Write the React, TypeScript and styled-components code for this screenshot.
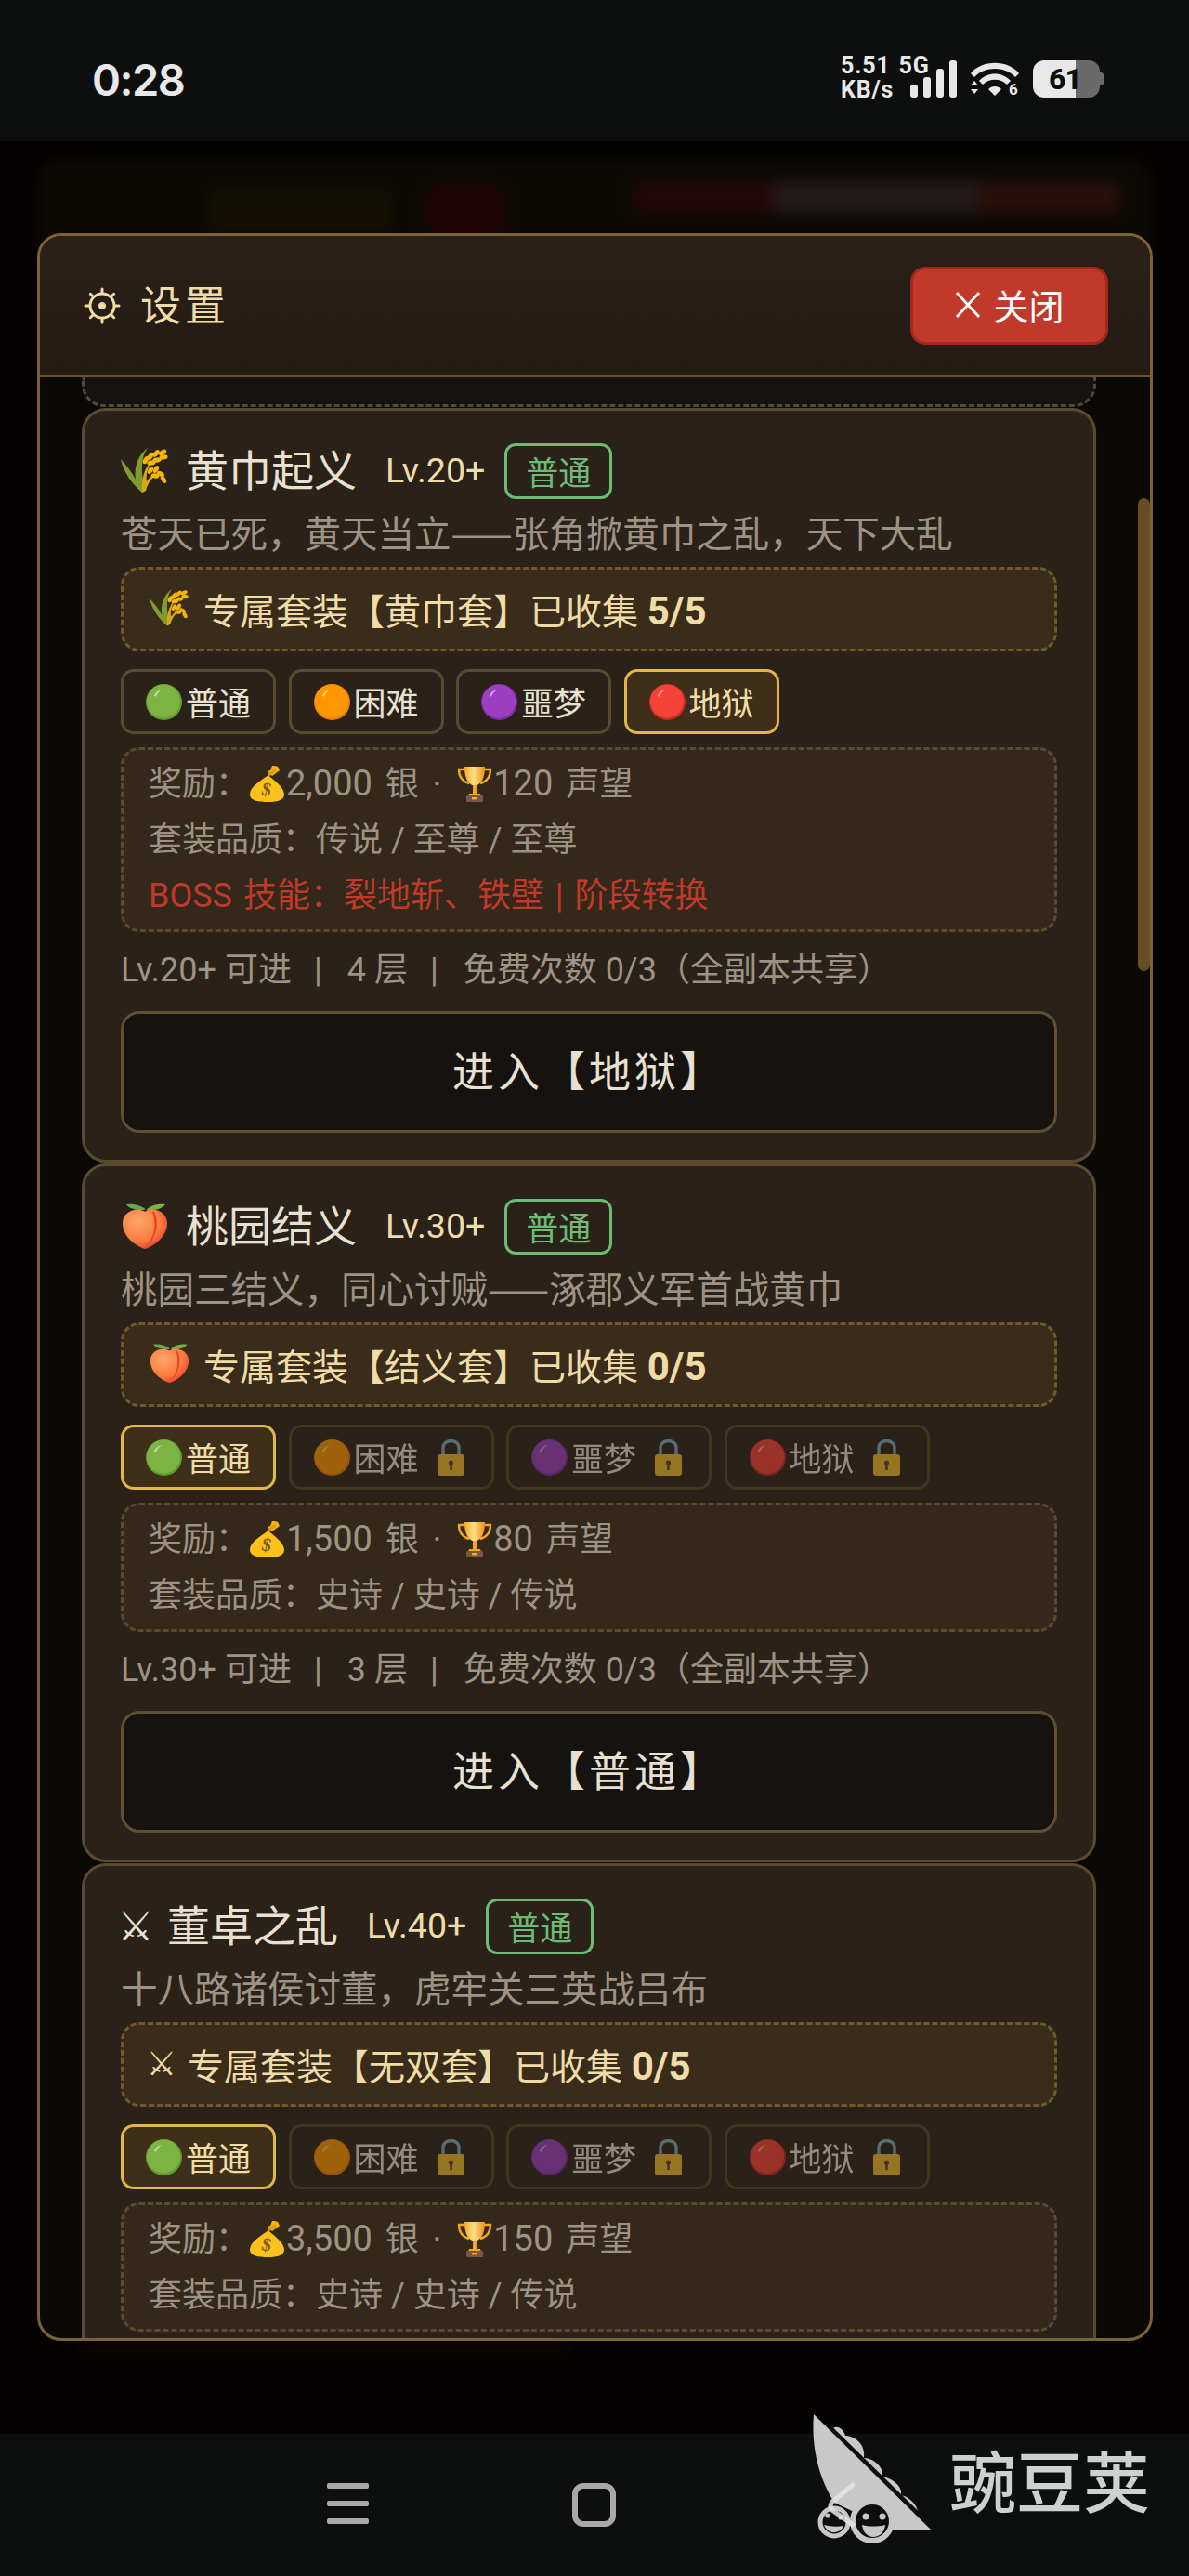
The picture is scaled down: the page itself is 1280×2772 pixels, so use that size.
import React from "react";
import styled, { createGlobalStyle } from "styled-components";

const Colors = {
  GOLD: "#f0dca8",
  TEXT: "#e8e0d0",
  MUTED: "#9c9384",
  LINE: "#5a4a30",
  RED: "#c0392b",
  GREEN: "#6dbb75",
  ACTIVE: "#e2b64a",
};

const FONT = `Roboto, "Noto Sans CJK SC", sans-serif`;

type Level = { dot: string; rim: string; name: string; locked?: boolean; active?: boolean };

const green = { dot: "#7cb342", rim: "#5f9a33", name: "普通" };
const orange = { dot: "#ff9800", rim: "#ef7f00", name: "困难" };
const purple = { dot: "#9c3fc0", rim: "#7d2ea3", name: "噩梦" };
const red = { dot: "#f44336", rim: "#c62828", name: "地狱" };

const Dot = ({ color, rim }: { color: string; rim: string }) => (
  <EmojiSvg $size={39} viewBox="0 0 40 40">
    <circle cx="20" cy="20" r="20" fill={rim} />
    <circle cx="19.5" cy="19" r="18.6" fill={color} />
    <path d="M9 13c2-4 5-6 9-7-3 2-5 4-7 8z" fill="#fff" opacity="0.55" />
  </EmojiSvg>
);

const Wheat = ({ size }: { size: number }) => (
  <EmojiSvg $size={size} viewBox="0 0 52 50">
    <path d="M23 48C12 39 3 26 0 12c7 8 12 14 16 22C14 22 18 8 29 0c-7 10-8 24-3 44z" fill="#7f9c2e" />
    <path d="M23 48c-1-14 2-26 10-34-5 10-6 16-5 22 4-6 8-9 13-9-7 4-12 11-14 19z" fill="#d8a818" />
    <g fill="#f7b500">
      <ellipse cx="27" cy="13" rx="4.6" ry="2.6" transform="rotate(-60 27 13)" />
      <ellipse cx="32" cy="9" rx="4.6" ry="2.6" transform="rotate(-55 32 9)" />
      <ellipse cx="38" cy="6" rx="4.6" ry="2.6" transform="rotate(-45 38 6)" />
      <ellipse cx="45" cy="5" rx="4.6" ry="2.6" transform="rotate(-30 45 5)" />
      <ellipse cx="33" cy="16" rx="4.6" ry="2.6" transform="rotate(-5 33 16)" />
      <ellipse cx="39" cy="13" rx="4.6" ry="2.6" transform="rotate(-5 39 13)" />
      <ellipse cx="46" cy="10" rx="4.6" ry="2.6" transform="rotate(-5 46 10)" />
      <ellipse cx="32" cy="24" rx="4.4" ry="2.5" transform="rotate(-60 32 24)" />
      <ellipse cx="38" cy="23" rx="4.4" ry="2.5" transform="rotate(-60 38 23)" />
      <ellipse cx="37" cy="30" rx="4.4" ry="2.5" transform="rotate(10 37 30)" />
      <ellipse cx="43" cy="28" rx="4.4" ry="2.5" transform="rotate(30 43 28)" />
      <ellipse cx="46" cy="34" rx="4.4" ry="2.5" transform="rotate(60 46 34)" />
    </g>
  </EmojiSvg>
);

const Peach = ({ size }: { size: number }) => (
  <EmojiSvg $size={size} viewBox="0 0 52 52">
    <path d="M26 6C20 1 11 0 5 1c4 5 12 7 21 6z" fill="#6aa84f" />
    <path d="M28 7c4-5 13-7 21-6-4 5-12 7-21 7z" fill="#7cb342" />
    <path d="M26 51C12 46 1 35 1 22 1 11 13 3 26 9c13-6 25 2 25 13 0 13-11 24-25 29z" fill="url(#peachFill)" />
    <path d="M34 9c5 12 4 28-8 41 13-11 17-28 10-41z" fill="#e53a1f" opacity="0.85" />
  </EmojiSvg>
);

const MoneyBag = () => (
  <EmojiSvg $size={40} viewBox="0 0 40 40">
    <path d="M25 1c3 0 5 0 6 1l2 4-8 6-5-5 3-1z" fill="#f7b500" />
    <path d="M21 11c3 4 17 12 17 21 0 7-10 8-18 8S1 39 1 32c0-9 12-15 20-21z" fill="#fcc21b" />
    <path d="M20 10l8-6 1 3-8 6z" fill="#d59a10" />
    <text x="19" y="33" fontFamily="Liberation Serif, serif" fontWeight="700" fontSize="20" fill="#7a5a1e" textAnchor="middle" transform="rotate(12 19 26)">$</text>
  </EmojiSvg>
);

const Trophy = () => (
  <EmojiSvg $size={40} viewBox="0 0 40 40">
    <path d="M10 5H3c0 9 4 13 11 15M30 5h7c0 9-4 13-11 15" fill="none" stroke="#f2a71d" strokeWidth="2.4" />
    <path d="M9 2h22c0 11-3 19-11 21C12 21 9 13 9 2z" fill="url(#cupFill)" />
    <rect x="18" y="22" width="4" height="9" fill="#f2a71d" />
    <path d="M14 31h12l1 3H13z" fill="#f2a71d" />
    <rect x="11" y="33" width="18" height="7" rx="1" fill="#7a5548" />
    <rect x="17" y="35" width="6" height="2.4" fill="#f7b500" />
  </EmojiSvg>
);

const Lock = () => (
  <EmojiSvg $size={39} viewBox="0 0 39 39">
    <path d="M11 18V9c0-10 17-10 17 0v9" fill="none" stroke="#7fa8bd" strokeWidth="3.4" />
    <rect x="5" y="16" width="29" height="23" rx="3" fill="#eebb2a" />
    <circle cx="19.5" cy="25" r="2.6" fill="#5d4037" />
    <rect x="18.2" y="26" width="2.6" height="7" fill="#5d4037" />
  </EmojiSvg>
);

const Gear = () => (
  <EmojiSvg $size={40} viewBox="0 0 40 40">
    <g stroke={Colors.GOLD} strokeLinecap="round" fill="none">
      <circle cx="20" cy="20" r="13" strokeWidth="3" />
      <circle cx="20" cy="20" r="3.6" fill={Colors.GOLD} strokeWidth="1" />
      <path d="M20 2v4M20 34v4M2 20h4M34 20h4M7.3 7.3l3 3M29.7 29.7l3 3M7.3 32.7l3-3M29.7 10.3l3-3" strokeWidth="3" />
    </g>
  </EmojiSvg>
);

type Stage = {
  icon: "wheat" | "peach" | "swords";
  name: string;
  lv: number;
  desc: string;
  suit: string;
  got: string;
  levels: Level[];
  reward: [string, string];
  quality: string;
  boss?: string;
  floors?: number;
  enter?: string;
};

const stages: Stage[] = [
  {
    icon: "wheat",
    name: "黄巾起义",
    lv: 20,
    desc: "苍天已死，黄天当立——张角掀黄巾之乱，天下大乱",
    suit: "黄巾套",
    got: "5/5",
    levels: [green, orange, purple, { ...red, active: true }],
    reward: ["2,000", "120"],
    quality: "传说 / 至尊 / 至尊",
    boss: "BOSS 技能：裂地斩、铁壁 | 阶段转换",
    floors: 4,
    enter: "地狱",
  },
  {
    icon: "peach",
    name: "桃园结义",
    lv: 30,
    desc: "桃园三结义，同心讨贼——涿郡义军首战黄巾",
    suit: "结义套",
    got: "0/5",
    levels: [
      { ...green, active: true },
      { ...orange, locked: true },
      { ...purple, locked: true },
      { ...red, locked: true },
    ],
    reward: ["1,500", "80"],
    quality: "史诗 / 史诗 / 传说",
    floors: 3,
    enter: "普通",
  },
  {
    icon: "swords",
    name: "董卓之乱",
    lv: 40,
    desc: "十八路诸侯讨董，虎牢关三英战吕布",
    suit: "无双套",
    got: "0/5",
    levels: [
      { ...green, active: true },
      { ...orange, locked: true },
      { ...purple, locked: true },
      { ...red, locked: true },
    ],
    reward: ["3,500", "150"],
    quality: "史诗 / 史诗 / 传说",
  },
];

const StageIcon = ({ icon, small }: { icon: Stage["icon"]; small?: boolean }) => {
  if (icon === "wheat") return <IconSlot $w={small ? 43 : 52}><Wheat size={small ? 43 : 52} /></IconSlot>;
  if (icon === "peach") return <IconSlot $w={small ? 43 : 52}><Peach size={small ? 43 : 50} /></IconSlot>;
  return <IconSlot $w={small ? 26 : 32}><Swords $small={small}>⚔</Swords></IconSlot>;
};

const StageCard = ({ stage }: { stage: Stage }) => (
  <Card>
    <TitleRow>
      <StageIcon icon={stage.icon} />
      <Title>{stage.name}</Title>
      <Lv>Lv.{stage.lv}+</Lv>
      <Tag>普通</Tag>
    </TitleRow>
    <Desc>{stage.desc}</Desc>
    <SuitBox>
      <StageIcon icon={stage.icon} small />
      <span>
        专属套装【{stage.suit}】已收集 <b>{stage.got}</b>
      </span>
    </SuitBox>
    <LevelRow>
      {stage.levels.map((l) => (
        <LevelButton key={l.name} $active={l.active} $locked={l.locked}>
          <LevelInner $locked={l.locked}>
            <Dot color={l.dot} rim={l.rim} />
            <span>{l.name}</span>
            {l.locked && <Lock />}
          </LevelInner>
        </LevelButton>
      ))}
    </LevelRow>
    <InfoBox>
      <RewardLine>
        奖励：<MoneyBag />
        <Num>{stage.reward[0]}</Num> 银<Mid>·</Mid>
        <Trophy />
        <Num>{stage.reward[1]}</Num> 声望
      </RewardLine>
      <InfoLine>套装品质：{stage.quality}</InfoLine>
      {stage.boss && <InfoLine $danger>{stage.boss}</InfoLine>}
    </InfoBox>
    {stage.enter && (
      <>
        <Meta>
          Lv.{stage.lv}+ 可进<Sep>|</Sep>
          {stage.floors} 层<Sep>|</Sep>免费次数 0/3（全副本共享）
        </Meta>
        <EnterButton>进入【{stage.enter}】</EnterButton>
      </>
    )}
  </Card>
);

const App = () => (
  <Page>
    <GlobalStyle />
    <GradientDefs width="0" height="0">
      <defs>
        <radialGradient id="peachFill" cx="0.35" cy="0.3" r="0.85">
          <stop offset="0" stopColor="#ffa56b" />
          <stop offset="0.6" stopColor="#fb7a3c" />
          <stop offset="1" stopColor="#e5252f" />
        </radialGradient>
        <linearGradient id="cupFill" x1="0" x2="1" y1="0" y2="0">
          <stop offset="0" stopColor="#f2a71d" />
          <stop offset="0.45" stopColor="#ffe08a" />
          <stop offset="1" stopColor="#ee8f12" />
        </linearGradient>
      </defs>
    </GradientDefs>

    <StatusBar>
      <Clock>0:28</Clock>
      <StatusRight>
        <Speed>
          <span>5.51 5G</span>
          <span>KB/s</span>
        </Speed>
        <svg width="50" height="40" viewBox="0 0 50 40">
          <rect x="0" y="26" width="8" height="14" rx="3" fill="#e8e8e8" />
          <rect x="14" y="18" width="8" height="22" rx="3" fill="#e8e8e8" />
          <rect x="28" y="9" width="8" height="31" rx="3" fill="#e8e8e8" />
          <rect x="42" y="0" width="8" height="40" rx="3" fill="#e8e8e8" />
        </svg>
        <svg width="54" height="40" viewBox="0 0 54 40">
          <path d="M1 14C13 -1 41 -1 53 14l-4 4C38 6 16 6 5 18z" fill="#e8e8e8" />
          <path d="M10 22c9-10 25-10 34 0l-4 4c-7-7-19-7-26 0z" fill="#e8e8e8" />
          <path d="M20 31c4-4 10-4 14 0l-7 7z" fill="#e8e8e8" />
          <path d="M1 27l4-5 4 5zM1 31h8l-4 5z" fill="#e8e8e8" />
          <text x="47" y="37" fontFamily="Roboto, sans-serif" fontWeight="700" fontSize="17" fill="#e8e8e8" textAnchor="middle">6</text>
        </svg>
        <Battery>
          <BatteryLevel>61</BatteryLevel>
        </Battery>
      </StatusRight>
    </StatusBar>

    <Backdrop>
      <BlurLayer>
        <BlurPanel />
        <BlurText />
        <BlurBadge />
        <BlurBar />
        <BlurGlow />
      </BlurLayer>
      <Modal>
        <ModalHeader>
          <HeaderTitle>
            <Gear />
            <span>设置</span>
          </HeaderTitle>
          <CloseButton>
            <svg width="30" height="30" viewBox="0 0 30 30">
              <path d="M3 2l24 26M27 2L3 28" stroke="#fff" strokeWidth="2.8" fill="none" />
            </svg>
            关闭
          </CloseButton>
        </ModalHeader>
        <ScrollArea>
          <PrevCardEnd />
          {stages.map((s) => (
            <StageCard key={s.name} stage={s} />
          ))}
          <ScrollThumb />
        </ScrollArea>
      </Modal>
    </Backdrop>

    <NavBar>
      <svg width="45" height="44" viewBox="0 0 45 44">
        <rect y="0" width="45" height="6" rx="2" fill="#a8a8a8" />
        <rect y="19" width="45" height="6" rx="2" fill="#a8a8a8" />
        <rect y="38" width="45" height="6" rx="2" fill="#a8a8a8" />
      </svg>
      <HomeKey />
    </NavBar>

    <Watermark>
      <svg width="150" height="160" viewBox="0 0 150 160">
        <path d="M16 13C13 50 22 82 38 108l62 29h42z" fill="#c8c8c8" />
        <path d="M37 28c3-3 11 0 13 8 10 0 22 9 20 24 10 0 22 10 20 20 10 2 22 10 20 20 10 2 18 12 18 18z" fill="#c8c8c8" />
        <path d="M34 27l96 94" stroke="#0d0f0f" strokeWidth="3.5" fill="none" />
        <circle cx="38" cy="129" r="15" fill="#0d0f0f" stroke="#c8c8c8" strokeWidth="5" />
        <circle cx="79" cy="128" r="21" fill="#0d0f0f" stroke="#c8c8c8" strokeWidth="6" />
        <circle cx="72" cy="123" r="3.5" fill="#c8c8c8" />
        <circle cx="90" cy="123" r="3.5" fill="#c8c8c8" />
        <circle cx="31" cy="122" r="2.6" fill="#c8c8c8" />
        <circle cx="45" cy="124" r="2.6" fill="#c8c8c8" />
        <path d="M68 132c7 2 17 2 25 0-1 9-7 13-13 13s-11-5-12-13zM27 132c7 2 14 2 21 1-3 9-17 10-21-1z" fill="#c8c8c8" />
        <path d="M58 89L36 107q-4 5 0 9l22 16" stroke="#e4e4e4" strokeWidth="5" strokeLinecap="round" fill="none" opacity="0.85" />
      </svg>
      <WatermarkText>豌豆荚</WatermarkText>
    </Watermark>
  </Page>
);

const GlobalStyle = createGlobalStyle`
  html, body {
    margin: 0;
    padding: 0;
    background: #050403;
  }
  * {
    box-sizing: border-box;
  }
`;

const Page = styled.div`
  position: relative;
  width: 1280px;
  height: 2772px;
  display: flex;
  flex-direction: column;
  overflow: hidden;
  font-family: ${FONT};
  color: ${Colors.TEXT};
`;

const GradientDefs = styled.svg`
  position: absolute;
`;

const EmojiSvg = styled.svg<{ $size: number }>`
  display: inline-block;
  flex: none;
  width: ${({ $size }) => $size}px;
  height: ${({ $size }) => $size}px;
  vertical-align: -7px;
`;

const StatusBar = styled.div`
  height: 152px;
  flex: none;
  display: flex;
  align-items: center;
  justify-content: space-between;
  padding: 32px 96px 14px 99px;
  background: #0d0f0f;
  color: #e8e8e8;
`;

const Clock = styled.div`
  font-size: 47px;
  font-weight: 600;
  font-family: Inter, sans-serif;
  letter-spacing: -1.5px;
`;

const StatusRight = styled.div`
  display: flex;
  align-items: center;
  gap: 14px;
`;

const Speed = styled.div`
  display: flex;
  flex-direction: column;
  width: 61px;
  margin-top: -3px;
  font-size: 25px;
  line-height: 26px;
  font-weight: 700;
  letter-spacing: 0.8px;
  word-spacing: 2px;
  white-space: nowrap;
`;

const Battery = styled.div`
  position: relative;
  width: 72px;
  height: 40px;
  border-radius: 12px;
  background: linear-gradient(to right, #e8e8e8 64%, #6a6a6a 64%);
  &::after {
    content: "";
    position: absolute;
    right: -4px;
    top: 13px;
    width: 4px;
    height: 14px;
    border-radius: 0 3px 3px 0;
    background: #6a6a6a;
  }
`;

const BatteryLevel = styled.div`
  padding-left: 17px;
  font-size: 32px;
  line-height: 40px;
  font-weight: 800;
  color: #0d0f0f;
  letter-spacing: -1px;
`;

const Backdrop = styled.div`
  position: relative;
  flex: 1;
  background: #040302;
`;

const BlurLayer = styled.div`
  position: absolute;
  inset: 0;
  overflow: hidden;
  filter: blur(7px);
`;

const BlurPanel = styled.div`
  position: absolute;
  left: 42px;
  right: 42px;
  top: 20px;
  height: 120px;
  border-radius: 24px;
  background: #0d0a06;
`;

const BlurText = styled.div`
  position: absolute;
  left: 226px;
  top: 52px;
  width: 196px;
  height: 46px;
  background: #131003;
`;

const BlurBadge = styled.div`
  position: absolute;
  left: 458px;
  top: 46px;
  width: 86px;
  height: 60px;
  border-radius: 18px;
  background: #1f0505;
`;

const BlurBar = styled.div`
  position: absolute;
  left: 682px;
  top: 44px;
  width: 522px;
  height: 32px;
  background: linear-gradient(to right, #240707 0 28%, #241a1c 30% 70%, #2a0e09 72%);
`;

const BlurGlow = styled.div`
  position: absolute;
  left: 90px;
  top: 2368px;
  width: 520px;
  height: 14px;
  background: #110402;
`;

const Modal = styled.div`
  position: absolute;
  left: 40px;
  top: 99px;
  width: 1201px;
  height: 2268px;
  display: flex;
  flex-direction: column;
  overflow: hidden;
  border: 3px solid #7d6233;
  border-radius: 26px;
  background: #0b0906;
`;

const ModalHeader = styled.div`
  flex: none;
  height: 152px;
  display: flex;
  align-items: center;
  justify-content: space-between;
  padding: 0 45px 0 47px;
  border-bottom: 3px solid #685230;
  background: linear-gradient(#2a2118, #231b14);
`;

const HeaderTitle = styled.div`
  display: flex;
  align-items: center;
  gap: 21px;
  font-size: 44px;
  letter-spacing: 4px;
  color: ${Colors.GOLD};
  span {
    margin-bottom: 5px;
  }
`;

const CloseButton = styled.div`
  width: 213px;
  height: 84px;
  display: flex;
  align-items: center;
  justify-content: center;
  gap: 12px;
  padding-bottom: 2px;
  border: 3px solid #a3271c;
  border-radius: 16px;
  background: ${Colors.RED};
  color: #fff;
  font-size: 38px;
`;

const ScrollArea = styled.div`
  position: relative;
  flex: 1;
  min-height: 0;
  display: flex;
  flex-direction: column;
  gap: 1px;
  padding: 0 58px 0 45px;
  overflow: hidden;
`;

const PrevCardEnd = styled.div`
  flex: none;
  height: 32px;
  border: 3px dashed #4a4a48;
  border-top: 0;
  border-radius: 0 0 24px 24px;
  background: #151210;
`;

const ScrollThumb = styled.div`
  position: absolute;
  right: 0;
  top: 130px;
  width: 13px;
  height: 509px;
  border-radius: 7px;
  background: #664e22;
`;

const Card = styled.div`
  flex: none;
  display: flex;
  flex-direction: column;
  padding: 35px 39px 29px;
  border: 3px solid ${Colors.LINE};
  border-radius: 26px;
  background: #2a2118;
`;

const TitleRow = styled.div`
  display: flex;
  align-items: center;
  height: 60px;
`;

const IconSlot = styled.span<{ $w: number }>`
  flex: none;
  display: inline-flex;
  align-items: center;
  justify-content: center;
  width: ${({ $w }) => $w}px;
`;

const Swords = styled.span<{ $small?: boolean }>`
  font-family: "DejaVu Sans", sans-serif;
  font-size: ${({ $small }) => ($small ? 36 : 44)}px;
  line-height: 1;
  color: ${({ $small }) => ($small ? Colors.GOLD : Colors.TEXT)};
`;

const Title = styled.div`
  margin: 0 0 8px 18px;
  font-size: 46px;
  color: ${Colors.TEXT};
`;

const Lv = styled.div`
  margin: 0 0 3px 31px;
  font-size: 37.5px;
  color: ${Colors.GOLD};
`;

const Tag = styled.div`
  margin-left: 21px;
  height: 60px;
  padding: 0 20px 2px;
  display: flex;
  align-items: center;
  border: 3px solid ${Colors.GREEN};
  border-radius: 12px;
  font-size: 35px;
  color: ${Colors.GREEN};
`;

const Desc = styled.div`
  margin-top: 9px;
  font-family: "Noto Sans CJK SC", sans-serif;
  font-size: 39.5px;
  line-height: 52px;
  color: ${Colors.MUTED};
  white-space: nowrap;
`;

const SuitBox = styled.div`
  margin-top: 12px;
  height: 91px;
  display: flex;
  align-items: center;
  gap: 15px;
  padding: 0 28px 2px;
  border: 3px dashed #6e5a2c;
  border-radius: 20px;
  background: #3a2c1a;
  font-size: 39px;
  color: ${Colors.GOLD};
  white-space: nowrap;
  b {
    font-size: 42px;
    font-weight: 700;
  }
`;

const LevelRow = styled.div`
  margin-top: 19px;
  display: flex;
  gap: 13.5px;
`;

const LevelButton = styled.div<{ $active?: boolean; $locked?: boolean }>`
  height: 70px;
  display: flex;
  align-items: center;
  padding: 0 24px;
  border: 3px solid ${({ $active, $locked }) => ($active ? Colors.ACTIVE : $locked ? "#43361f" : Colors.LINE)};
  border-radius: 14px;
  background: ${({ $active }) => ($active ? "#3f2f18" : "#2a2118")};
  color: ${({ $active }) => ($active ? Colors.GOLD : Colors.TEXT)};
`;

const LevelInner = styled.div<{ $locked?: boolean }>`
  display: flex;
  align-items: center;
  gap: 4px;
  font-size: 35px;
  ${({ $locked }) => $locked && `opacity: 0.55;`}
  span {
    margin-bottom: 2px;
  }
  svg + span + svg {
    margin-left: 11px;
  }
`;

const InfoBox = styled.div`
  margin-top: 14px;
  padding: 6px 27px;
  border: 3px dashed ${Colors.LINE};
  border-radius: 20px;
  background: #332819;
`;

const InfoLine = styled.div<{ $danger?: boolean }>`
  font-size: 36px;
  line-height: 60px;
  white-space: nowrap;
  color: ${({ $danger }) => ($danger ? Colors.RED : Colors.MUTED)};
  ${({ $danger }) => $danger && `word-spacing: 3px;`}
`;

const RewardLine = styled(InfoLine)`
  word-spacing: 5px;
`;

const Num = styled.span`
  font-size: 38px;
`;

const Mid = styled.span`
  margin: 0 16px 0 15px;
`;

const Meta = styled.div`
  margin-top: 15px;
  font-size: 36px;
  line-height: 52px;
  white-space: nowrap;
  color: ${Colors.MUTED};
`;

const Sep = styled.span`
  margin: 0 27px 0 24px;
`;

const EnterButton = styled.div`
  margin-top: 18px;
  height: 131px;
  display: flex;
  align-items: center;
  justify-content: center;
  padding-bottom: 6px;
  border: 3px solid #5f4f33;
  border-radius: 20px;
  background: #151210;
  font-size: 45px;
  letter-spacing: 4px;
  color: ${Colors.TEXT};
`;

const NavBar = styled.div`
  flex: none;
  height: 153px;
  display: flex;
  align-items: flex-start;
  gap: 219px;
  padding: 53px 0 0 352px;
  background: #0d0f0f;
`;

const HomeKey = styled.div`
  width: 47px;
  height: 47px;
  border: 6px solid #a8a8a8;
  border-radius: 12px;
`;

const Watermark = styled.div`
  position: absolute;
  left: 860px;
  top: 2585px;
  display: flex;
  align-items: flex-start;
  gap: 12px;
`;

const WatermarkText = styled.div`
  margin-top: 47px;
  font-size: 72px;
  line-height: 84px;
  font-weight: 500;
  color: #cfd0d0;
  white-space: nowrap;
`;

export default App;
